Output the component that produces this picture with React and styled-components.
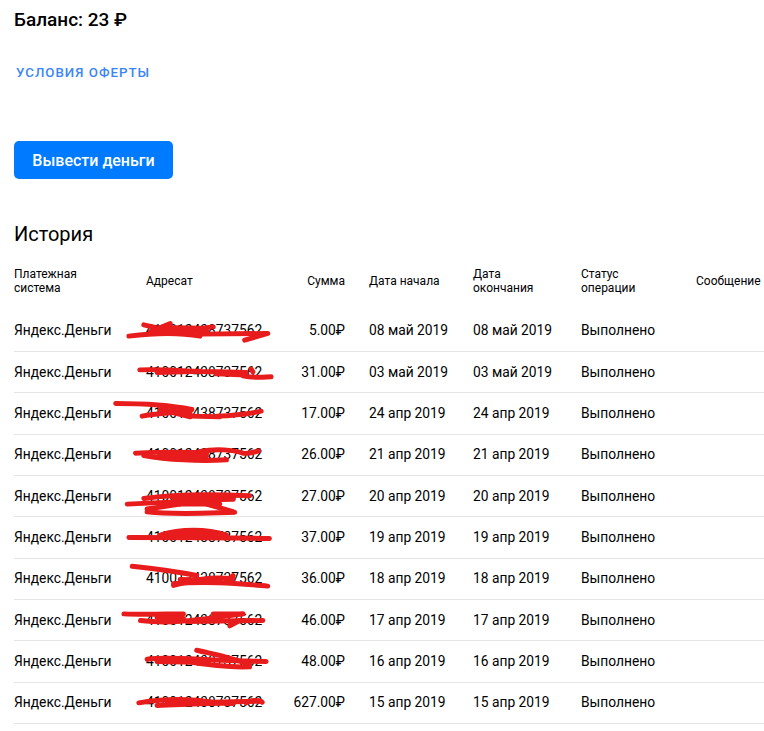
import styled, { createGlobalStyle } from "styled-components";

const GlobalStyle = createGlobalStyle`
  html, body {
    margin: 0;
    padding: 0;
    background: #fff;
  }
  body {
    font-family: "Roboto", "Liberation Sans", sans-serif;
    color: #000;
  }
`;

const Page = styled.div`
  width: 764px;
  padding: 8px 0 0 14px;
  box-sizing: border-box;
`;

const Balance = styled.h1`
  margin: 0;
  font-size: 19px;
  line-height: 24px;
  font-weight: 500;
`;

const OfferLink = styled.a`
  display: block;
  margin: 33px 0 0 2px;
  font-size: 13.3px;
  line-height: 16px;
  letter-spacing: 1px;
  font-weight: 500;
  color: #3b86f7;
  text-decoration: none;
`;

const WithdrawButton = styled.button`
  display: block;
  width: 159px;
  height: 38px;
  margin-top: 60px;
  padding: 0;
  border: none;
  border-radius: 5px;
  background: #007aff;
  color: #fff;
  font-family: inherit;
  font-size: 16px;
  font-weight: 500;
`;

const HistoryTitle = styled.h2`
  margin: 42px 0 0;
  font-size: 20px;
  line-height: 26px;
  font-weight: 400;
`;

const Table = styled.table`
  width: 750px;
  table-layout: fixed;
  border-collapse: separate;
  border-spacing: 0;
`;

const HeadCell = styled.th`
  padding: 20px 0 15.67px;
  font-size: 12px;
  line-height: 14px;
  font-weight: 400;
  text-align: ${({ $right }) => ($right ? "right" : "left")};
  padding-right: ${({ $right }) => ($right ? "24px" : "0")};
`;

const Cell = styled.td`
  position: relative;
  box-sizing: border-box;
  height: 41.33px;
  padding: 0 0 1px;
  border-bottom: 1px solid #e5e5e5;
  font-size: 13.8px;
  white-space: nowrap;
  text-align: ${({ $right }) => ($right ? "right" : "left")};
  padding-right: ${({ $right }) => ($right ? "24px" : "0")};
`;

const Scribble = styled.svg`
  position: absolute;
  left: -26px;
  top: 0;
  width: 160px;
  height: 41px;
  overflow: visible;
  pointer-events: none;
  fill: none;
  stroke: #e81c1c;
  stroke-width: 15;
  stroke-linecap: round;
  stroke-linejoin: round;
`;

// red marker strokes hiding the wallet number, one set per row
const rows = [
  { amount: "5.00", date: "08 май 2019", marks: ["M385 76C450 68 520 62 600 76", "M430 42L520 62L640 48", "M510 38L450 62", "M600 70L800 68", "M735 88L805 68", "M470 62L620 60", "M480 50L600 52"] },
  { amount: "31.00", date: "03 май 2019", marks: ["M418 54C500 50 560 60 650 60L740 62", "M730 72C760 80 790 76 815 75", "M755 52L760 60", "M470 62L600 58", "M650 66L740 70"] },
  { amount: "17.00", date: "24 апр 2019", marks: ["M345 32C420 32 500 35 575 50", "M425 70C480 60 540 60 575 50", "M500 55L570 72", "M650 70C700 68 750 62 785 55", "M480 50L570 62", "M570 70L660 72"] },
  { amount: "26.00", date: "21 апр 2019", marks: ["M405 55C470 52 560 50 620 55", "M430 62C500 75 600 80 680 75", "M600 50C650 40 700 45 730 55C750 58 770 50 778 48", "M480 64L620 64"] },
  { amount: "27.00", date: "20 апр 2019", marks: ["M430 68C520 55 650 55 750 60", "M380 85C480 80 600 75 700 70", "M440 100L540 85", "M440 108C520 118 620 112 705 110", "M480 85L660 85", "M620 85L700 108", "M520 68L700 70"] },
  { amount: "37.00", date: "19 апр 2019", marks: ["M385 62C500 62 700 62 810 65", "M480 55C540 35 620 35 680 55", "M510 52L650 52"] },
  { amount: "36.00", date: "18 апр 2019", marks: ["M395 22C470 30 540 40 590 50", "M520 80C560 70 620 50 700 60", "M520 75C620 65 720 75 805 82", "M700 50L680 70", "M540 62L660 64"] },
  { amount: "46.00", date: "17 апр 2019", marks: ["M370 42C430 45 500 42 550 42", "M420 62C500 72 560 65 730 42", "M640 42L730 42", "M560 65L790 62", "M690 78L720 62", "M470 52L550 56"] },
  { amount: "48.00", date: "16 апр 2019", marks: ["M440 55C520 45 600 60 800 62", "M590 28C640 40 700 50 750 72", "M560 62C620 72 700 80 750 78", "M470 62L600 64"] },
  { amount: "627.00", date: "15 апр 2019", marks: ["M415 60C480 50 560 45 640 58L780 55", "M470 68C560 65 620 60 700 62", "M740 60C750 52 780 50 788 58", "M500 56L620 58"] },
];

const App = () => {
  return (
    <Page>
      <GlobalStyle />
      <Balance>Баланс: 23 ₽</Balance>
      <OfferLink href="#">УСЛОВИЯ ОФЕРТЫ</OfferLink>
      <WithdrawButton>Вывести деньги</WithdrawButton>
      <HistoryTitle>История</HistoryTitle>
      <Table>
        <colgroup>
          <col style={{ width: 132 }} />
          <col style={{ width: 130 }} />
          <col style={{ width: 93 }} />
          <col style={{ width: 104 }} />
          <col style={{ width: 108 }} />
          <col style={{ width: 115 }} />
          <col style={{ width: 68 }} />
        </colgroup>
        <thead>
          <tr>
            <HeadCell>Платежная<br />система</HeadCell>
            <HeadCell>Адресат</HeadCell>
            <HeadCell $right>Сумма</HeadCell>
            <HeadCell>Дата начала</HeadCell>
            <HeadCell>Дата<br />окончания</HeadCell>
            <HeadCell>Статус<br />операции</HeadCell>
            <HeadCell>Сообщение</HeadCell>
          </tr>
        </thead>
        <tbody>
          {rows.map((row) => (
            <tr key={row.date}>
              <Cell>Яндекс.Деньги</Cell>
              <Cell>
                410012438737562
                <Scribble viewBox="360 0 480 124" aria-hidden="true">
                  {row.marks.map((d) => (
                    <path key={d} d={d} />
                  ))}
                </Scribble>
              </Cell>
              <Cell $right>{row.amount}₽</Cell>
              <Cell>{row.date}</Cell>
              <Cell>{row.date}</Cell>
              <Cell>Выполнено</Cell>
              <Cell />
            </tr>
          ))}
        </tbody>
      </Table>
    </Page>
  );
};

export default App;
